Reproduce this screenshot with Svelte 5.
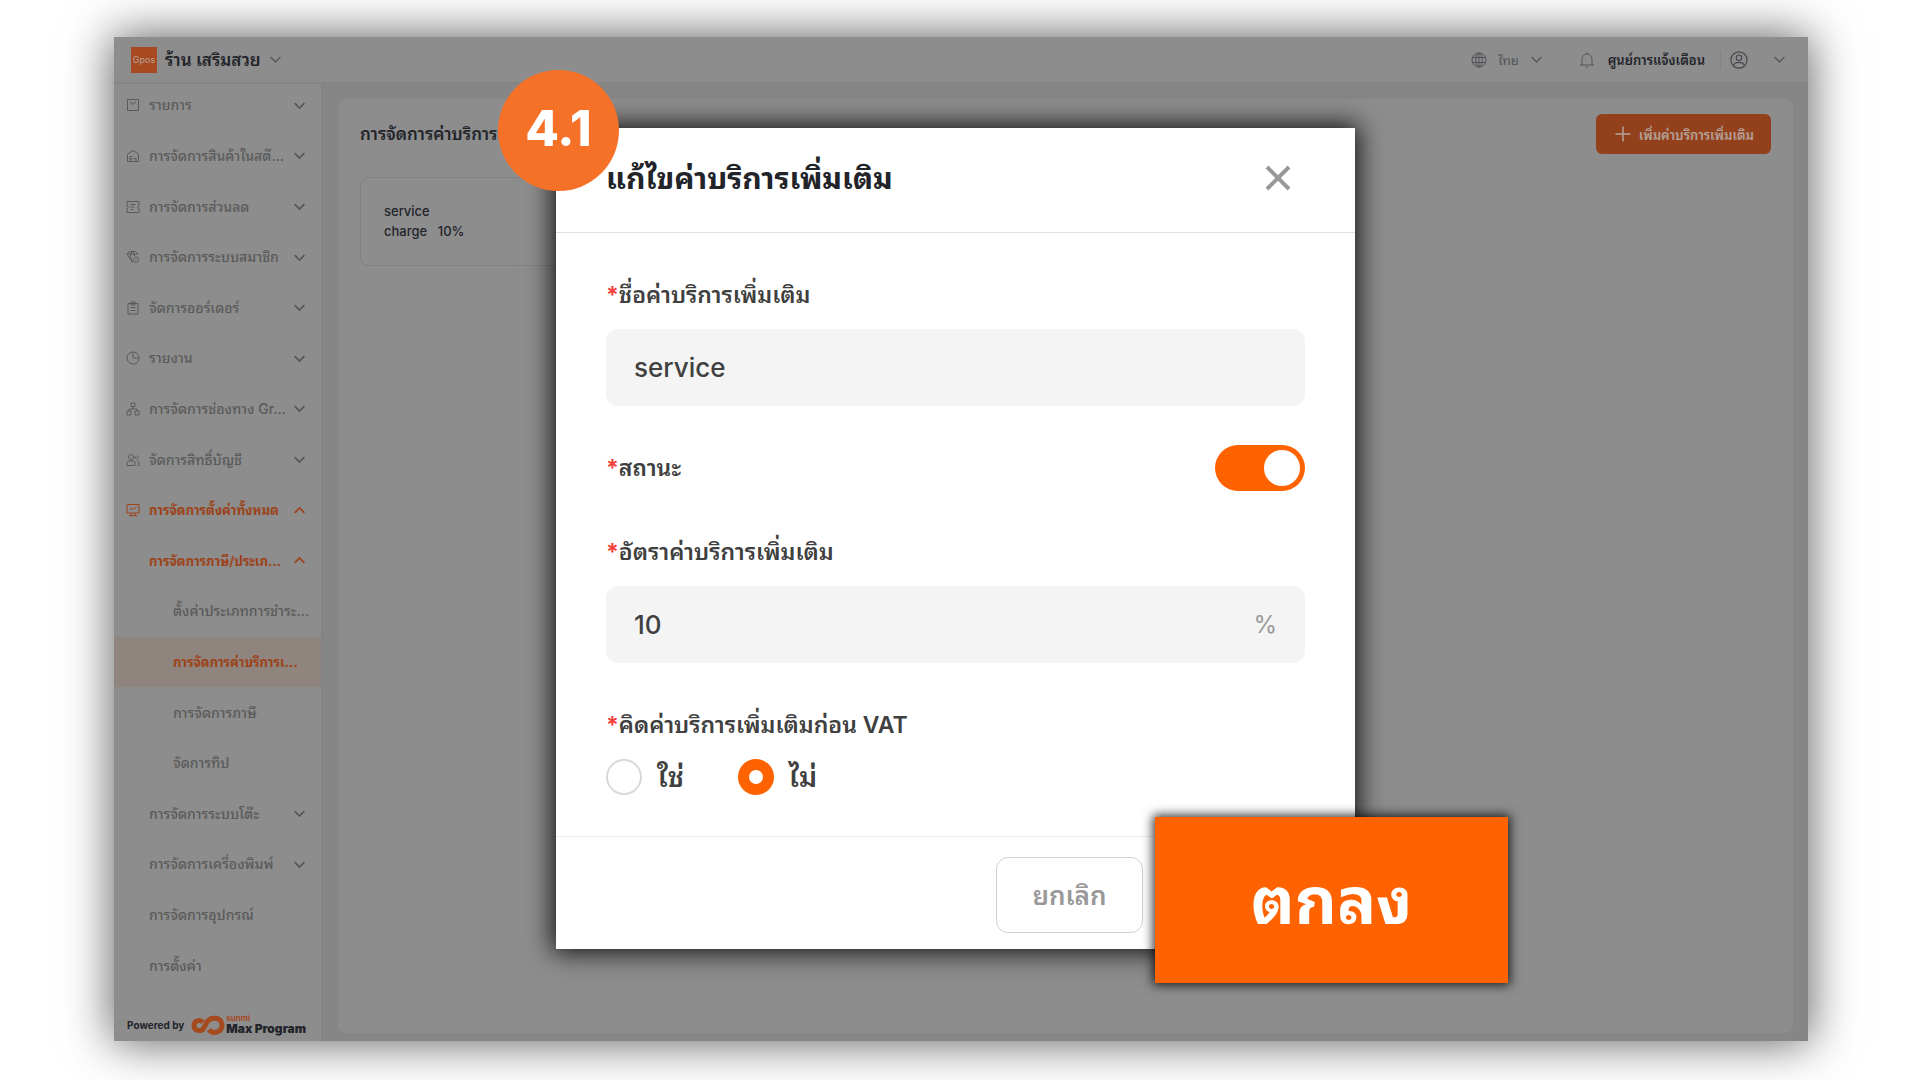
<script>
  let name = $state('service');
  let rate = $state('10');
  let enabled = $state(true);
  let beforeVat = $state('no');

  const menu = [
    { label: 'รายการ', icon: 'bag', arrow: 'down' },
    { label: 'การจัดการสินค้าในสต๊...', icon: 'store', arrow: 'down' },
    { label: 'การจัดการส่วนลด', icon: 'coupon', arrow: 'down' },
    { label: 'การจัดการระบบสมาชิก', icon: 'member', arrow: 'down' },
    { label: 'จัดการออร์เดอร์', icon: 'clipboard', arrow: 'down' },
    { label: 'รายงาน', icon: 'pie', arrow: 'down' },
    { label: 'การจัดการช่องทาง Gr...', icon: 'tree', arrow: 'down' },
    { label: 'จัดการสิทธิ์บัญชี', icon: 'users', arrow: 'down' },
    { label: 'การจัดการตั้งค่าทั้งหมด', icon: 'monitor', arrow: 'up', on: true },
    { label: 'การจัดการภาษี/ประเภ...', level: 1, arrow: 'up', on: true },
    { label: 'ตั้งค่าประเภทการชำระ...', level: 2 },
    { label: 'การจัดการค่าบริการเ...', level: 2, on: true, current: true },
    { label: 'การจัดการภาษี', level: 2 },
    { label: 'จัดการทิป', level: 2 },
    { label: 'การจัดการระบบโต๊ะ', level: 1, arrow: 'down' },
    { label: 'การจัดการเครื่องพิมพ์', level: 1, arrow: 'down' },
    { label: 'การจัดการอุปกรณ์', level: 1 },
    { label: 'การตั้งค่า', level: 1 }
  ];

  const icons = {
    bag: 'M1.5 1.5h11v11h-11z M4.5 3.5c0 3.4 5 3.4 5 0',
    store: 'M1.5 5.2 7 1.4l5.500 3.800v7.300h-11z M4 12.500V7.500h2.500 M4 10h2.500 M7.500 9.500h2.500v3',
    coupon: 'M1 1.500h12v3.800l-1 .7v2l1 .7v3.800H1V8.700l1-.7V6l-1-.7z M4.500 4.500h5 M4.500 7h4 M4.500 9.500h2.500',
    member: 'M1 4h11 M3.500 1.500h6L12 4 M3.500 1.500 1 4l5.500 8.500 M4.500 4c0 3 .5 5.500 2 8.500 M4.500 4l1.500-2.500L8.500 4v2 M10 7a2.700 2.700 0 1 0 .1 0z M10 8.800v1.500',
    clipboard: 'M2 2.500h10v10.500H2z M5 1h4v3H5z M4.500 6.500h5 M4.500 9.500h5',
    pie: 'M7 1a6 6 0 1 0 .1 0z M7 1v6h6',
    tree: 'M5 1h4v3.500H5z M7 4.500V7 M3 9V7h8v2 M1 9h4v4H1z M9 9h4v4H9z',
    users: 'M5 1.500a2.500 2.500 0 1 0 .1 0z M1 12.500V10c0-1 .8-2 2-2h4c1.200 0 2 1 2 2v2.500z M10.500 3a1.500 1.500 0 1 0 .1 0z M11 8h.5c1 0 1.500.8 1.500 1.500v3h-1.500',
    monitor: 'M1 1.500h12v8.500H1z M3.500 7l2-2 2 1.500 3-3 M5 10v2.500 M9 10v2.500 M3 12.700h8'
  };
</script>

{#snippet chevron(dir)}
  <svg class="chevron" class:up={dir === 'up'} viewBox="0 0 12 12" aria-hidden="true"><path d="M1.500 3.800 6 8.300l4.500-4.500" /></svg>
{/snippet}

<div class="stage">
  <div class="frame">
    <header class="topbar">
      <button class="shop">
        <span class="logo">Gpos</span>
        <span>ร้าน เสริมสวย</span>
        {@render chevron('down')}
      </button>
      <div class="tools">
        <button class="lang">
          <svg viewBox="0 0 16 16" aria-hidden="true"><circle cx="8" cy="8" r="7" /><ellipse cx="8" cy="8" rx="3.200" ry="7" /><path d="M1.500 5.500h13M1.500 10.500h13M8 1v14" /></svg>
          <span>ไทย</span>
          {@render chevron('down')}
        </button>
        <button class="alerts">
          <svg viewBox="0 0 16 16" aria-hidden="true"><path d="M3 13V7a5 5 0 0 1 10 0v6M1 13h14M7 15.200h2M8 .5V2" /></svg>
          <span>ศูนย์การแจ้งเตือน</span>
        </button>
        <button class="account" aria-label="บัญชี">
          <svg viewBox="0 0 16 16" aria-hidden="true"><circle cx="8" cy="8" r="7.200" /><circle cx="8" cy="6" r="2.400" /><path d="M3.500 12.500c.8-3.200 8.200-3.200 9 0" /></svg>
          {@render chevron('down')}
        </button>
      </div>
    </header>

    <div class="columns">
      <aside class="sidebar">
        <nav>
          {#each menu as item}
            <a href="#menu" class="item" class:level2={item.level === 2} class:on={item.on} class:current={item.current}>
              {#if item.level !== 2}
                <span class="icon">
                  {#if item.icon}
                    <svg viewBox="0 0 14 14" aria-hidden="true"><path d={icons[item.icon]} /></svg>
                  {/if}
                </span>
              {/if}
              <span class="label">{item.label}</span>
              {#if item.arrow}{@render chevron(item.arrow)}{/if}
            </a>
          {/each}
        </nav>
        <div class="powered">
          <span>Powered by</span>
          <svg viewBox="0 0 34 20" aria-hidden="true">
            <path d="M12 7.200C9 4 3 5.500 3 10.500c0 5.500 7 6.500 9.500 3L16 7C19.500 1.200 31 2 31 10s-9.500 9.500-13 4.500" />
          </svg>
          <span class="brand"><small>sunmi</small><b>Max Program</b></span>
        </div>
      </aside>

      <main>
        <section class="panel">
          <div class="panel-head">
            <h1>การจัดการค่าบริการเพิ่มเติม</h1>
            <button class="add">
              <svg viewBox="0 0 16 16" aria-hidden="true"><path d="M8 .5v15M.5 8h15" /></svg>
              เพิ่มค่าบริการเพิ่มเติม
            </button>
          </div>
          <article class="charge"><span>service<br />charge</span><span>10%</span></article>
        </section>
      </main>
    </div>

    <div class="overlay">
      <form class="modal" onsubmit={(e) => e.preventDefault()}>
        <span class="step">4.1</span>
        <div class="modal-head">
          <h2>แก้ไขค่าบริการเพิ่มเติม</h2>
          <button type="button" class="close" aria-label="ปิด">
            <svg viewBox="0 0 26 26" aria-hidden="true"><path d="M2 2l22 22M24 2 2 24" /></svg>
          </button>
        </div>
        <div class="modal-body">
          <div class="field">
            <label for="name"><i>*</i>ชื่อค่าบริการเพิ่มเติม</label>
            <div class="box"><input id="name" type="text" bind:value={name} /></div>
          </div>
          <div class="switch-row">
            <label for="status"><i>*</i>สถานะ</label>
            <input id="status" class="switch" type="checkbox" role="switch" bind:checked={enabled} />
          </div>
          <div class="field">
            <label for="rate"><i>*</i>อัตราค่าบริการเพิ่มเติม</label>
            <div class="box"><input id="rate" type="text" bind:value={rate} /><span>%</span></div>
          </div>
          <fieldset>
            <legend><i>*</i>คิดค่าบริการเพิ่มเติมก่อน VAT</legend>
            <div class="radios">
              <label><input type="radio" name="vat" value="yes" bind:group={beforeVat} />ใช่</label>
              <label><input type="radio" name="vat" value="no" bind:group={beforeVat} />ไม่</label>
            </div>
          </fieldset>
        </div>
        <div class="modal-foot">
          <button type="button" class="cancel">ยกเลิก</button>
          <button type="submit" class="confirm">ตกลง</button>
        </div>
      </form>
    </div>
  </div>
</div>

<style>
  :global(body) { background: #fff; }
  * { box-sizing: border-box; }
  .stage {
    display: flex;
    min-height: 100vh;
    padding: 37px 112px 39px 114px;
    overflow: hidden;
    font-family: Inter, 'Noto Sans Thai Looped', 'Noto Sans', 'Liberation Sans', sans-serif;
    color: #22242a;
  }
  button { font: inherit; color: inherit; background: none; border: 0; padding: 0; }
  svg { flex: none; fill: none; stroke: currentColor; }
  h1, h2 { margin: 0; font-weight: 600; }
  .frame {
    position: relative;
    flex: 1;
    display: flex;
    flex-direction: column;
    background: #8d8d8d;
    box-shadow: 0 0 44px 2px rgba(0, 0, 0, 0.62);
  }
  .topbar {
    display: flex;
    justify-content: space-between;
    align-items: center;
    height: 47px;
    padding: 0 22px 0 17px;
    border-bottom: 2px solid #858585;
  }
  .shop { display: flex; align-items: center; gap: 8px; font-size: 17px; line-height: 26px; font-weight: 600; }
  .logo {
    display: grid;
    place-items: center;
    width: 26px;
    height: 26px;
    background: #a84a20;
    color: #b9a297;
    font-size: 9px;
    font-weight: 400;
  }
  .chevron { width: 13px; height: 13px; color: #55575b; stroke-width: 1.300; }
  .chevron.up { transform: rotate(180deg); }
  .tools { display: flex; align-items: center; font-size: 13px; line-height: 20px; }
  .tools button { display: flex; align-items: center; }
  .lang { gap: 11px; color: #505257; margin-right: 36px; }
  .lang svg:first-child, .alerts svg { width: 16px; height: 16px; }
  .alerts { gap: 13px; font-weight: 600; }
  .alerts svg { color: #55575b; }
  .account { gap: 25px; margin-left: 15px; padding-left: 9px; border-left: 1px solid #838383; }
  .account svg:first-child { width: 18px; height: 18px; color: #44464b; }
  .columns { flex: 1; display: flex; }
  .sidebar {
    display: flex;
    flex-direction: column;
    width: 209px;
    border-right: 2px solid #848484;
  }
  nav { flex: 1; display: flex; flex-direction: column; margin-top: -4px; }
  .item {
    flex: 1;
    display: flex;
    align-items: center;
    padding: 0 15px 0 12px;
    color: #5a5a5a;
    font-size: 14px;
    font-weight: 500;
    line-height: 20px;
    text-decoration: none;
    white-space: nowrap;
  }
  .item.level2 { padding-left: 59px; padding-right: 0; }
  .item.on, .item.on .chevron { color: #9c4218; }
  .item.on { font-size: 13px; font-weight: 700; }
  .item.current { background: #90847e; }
  .icon { width: 23px; display: flex; }
  .icon svg { width: 14px; height: 14px; }
  .label { flex: 1; }
  .item .chevron { stroke-width: 1.600; }
  .powered {
    display: flex;
    align-items: center;
    height: 50px;
    padding: 18px 12px 0 13px;
    font-size: 10px;
    font-weight: 700;
    white-space: nowrap;
  }
  .powered svg { width: 34px; height: 20px; margin: 0 1px 0 7px; color: #a5491f; stroke-width: 5; }
  .brand { display: flex; flex-direction: column; }
  .brand small { color: #a5491f; font-size: 8px; line-height: 8px; }
  .brand b { font-size: 12px; line-height: 14px; font-weight: 900; }
  main { flex: 1; display: flex; padding: 15px 15px 8px; background: #868686; }
  .panel { flex: 1; padding: 15px 22px 0 22px; border-radius: 8px; background: #8d8d8d; }
  .panel-head { display: flex; justify-content: space-between; align-items: center; }
  .panel-head h1 { font-size: 17px; line-height: 24px; }
  .add {
    display: flex;
    align-items: center;
    gap: 8px;
    height: 40px;
    padding: 0 17px 0 19px;
    border-radius: 6px;
    background: #93411c;
    color: #b5a199;
    font-size: 13px;
    font-weight: 600;
  }
  .add svg { width: 16px; height: 16px; stroke-width: 1.500; }
  .charge {
    display: flex;
    align-items: flex-end;
    gap: 8px;
    width: 340px;
    height: 89px;
    margin-top: 23px;
    padding: 0 23px 24px;
    border: 1px solid #828282;
    border-radius: 8px;
    font-size: 13px;
    font-weight: 500;
    line-height: 20px;
  }
  .overlay {
    position: absolute;
    inset: 0;
    display: flex;
    justify-content: center;
    align-items: center;
    padding: 0 11px 1px 0;
  }
  .modal {
    position: relative;
    width: 799px;
    background: #fff;
    box-shadow: 0 0 24px 3px rgba(0, 0, 0, 0.9);
    color: #404040;
  }
  .step {
    position: absolute;
    left: -58px;
    top: -58px;
    display: grid;
    place-items: center;
    width: 121px;
    height: 121px;
    padding-bottom: 4px;
    border-radius: 50%;
    background: #f57128;
    color: #fff;
    font-size: 49px;
    line-height: 60px;
    font-weight: 800;
  }
  .modal-head {
    display: flex;
    justify-content: space-between;
    align-items: center;
    height: 105px;
    padding: 0 64px 4px 50px;
    border-bottom: 1px solid #e2dfdc;
    color: #22242a;
  }
  .modal-head h2 { font-size: 30px; line-height: 44px; font-weight: 700; }
  .close { display: flex; color: #999; }
  .close svg { width: 26px; height: 26px; stroke-width: 4; }
  .modal-body { padding: 44px 50px 41px; font-size: 23px; font-weight: 600; line-height: 36px; }
  .modal-body i { color: #f5403c; font-style: normal; font-weight: 700; }
  .field { display: flex; flex-direction: column; gap: 16px; }
  .box {
    display: flex;
    align-items: center;
    height: 77px;
    padding: 0 28px;
    border-radius: 12px;
    background: #f4f4f4;
    color: #999;
    font-size: 24px;
    font-weight: 400;
  }
  .box input {
    flex: 1;
    min-width: 0;
    padding: 0;
    border: 0;
    outline: 0;
    background: none;
    color: #404040;
    font: inherit;
    font-size: 26px;
    font-weight: 500;
  }
  .switch-row { display: flex; justify-content: space-between; align-items: center; padding: 39px 0 43px; }
  .switch {
    appearance: none;
    display: flex;
    width: 90px;
    height: 46px;
    margin: 0;
    padding: 5px;
    border-radius: 23px;
    background: #bbb;
  }
  .switch::before { content: ''; width: 36px; height: 36px; border-radius: 50%; background: #fff; }
  .switch:checked { justify-content: flex-end; background: #ff6200; }
  fieldset { margin: 44px 0 0; padding: 0; border: 0; }
  legend { padding: 0; }
  .radios { display: flex; gap: 54px; padding-top: 16px; font-size: 28px; }
  .radios label { display: flex; align-items: center; gap: 15px; }
  .radios input {
    appearance: none;
    width: 36px;
    height: 36px;
    margin: 0;
    border: 2px solid #dcd9d6;
    border-radius: 50%;
    background: #fff;
  }
  .radios input:checked { border: 11px solid #ff6200; }
  .modal-foot {
    display: flex;
    justify-content: flex-end;
    height: 113px;
    padding: 20px 212px 0 50px;
    border-top: 1px solid #ececec;
  }
  .modal-foot .cancel {
    width: 147px;
    height: 76px;
    padding-bottom: 4px;
    border: 1px solid #d6d0cb;
    border-radius: 12px;
    color: #999;
    font-size: 26px;
    font-weight: 600;
  }
  .modal-foot .confirm {
    position: absolute;
    right: -153px;
    bottom: -34px;
    width: 353px;
    height: 166px;
    padding-bottom: 10px;
    background: #ff6200;
    box-shadow: 0 0 10px 2px rgba(0, 0, 0, 0.8);
    color: #fff;
    font-size: 65px;
    font-weight: 700;
  }
</style>
